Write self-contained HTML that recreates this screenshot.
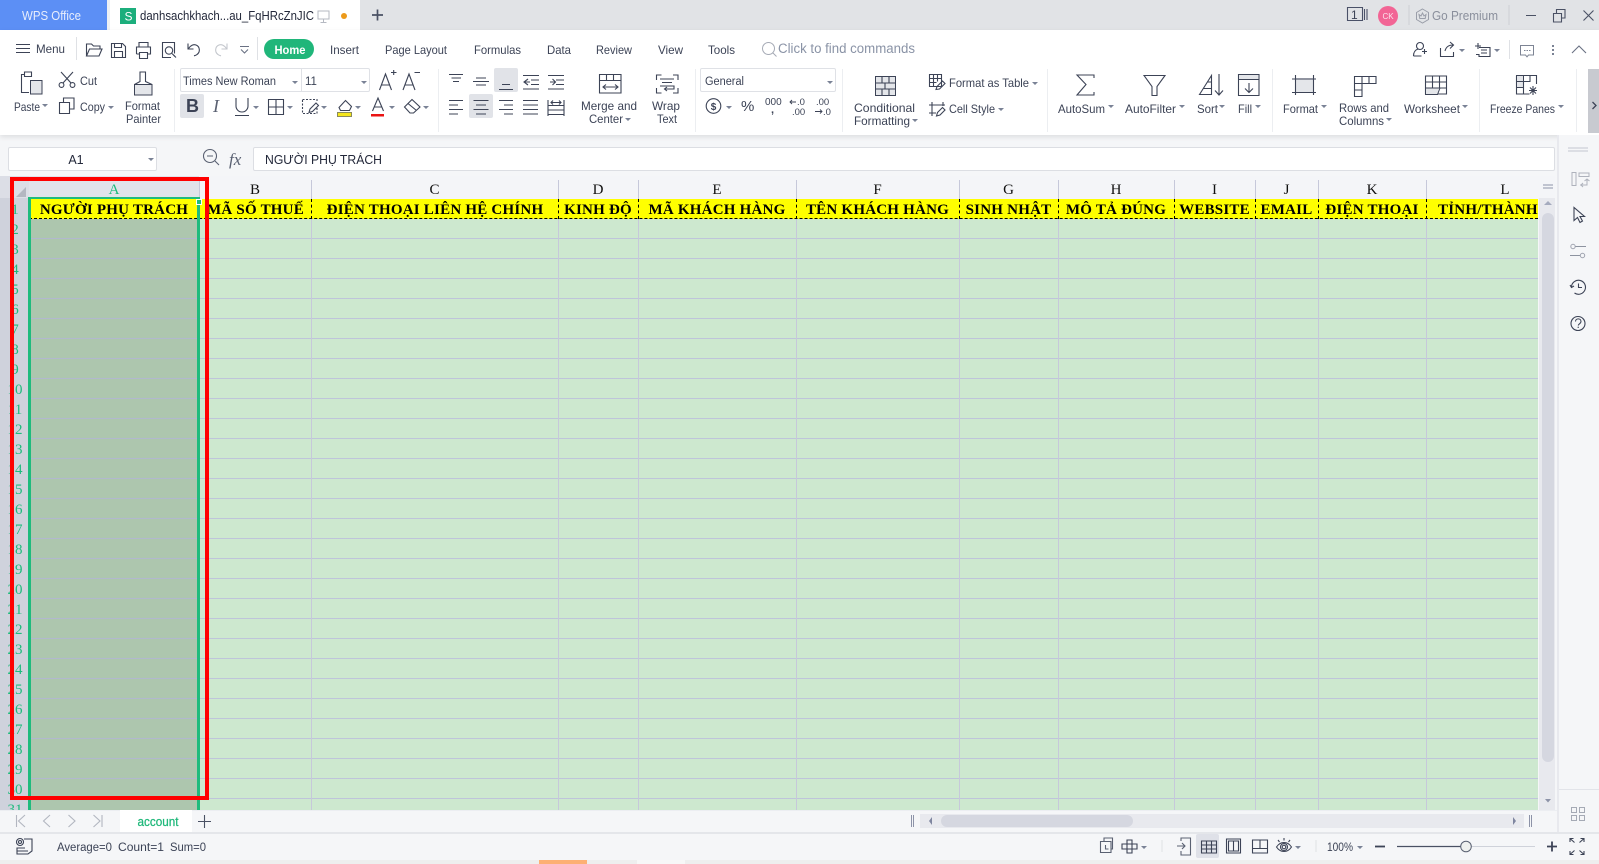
<!DOCTYPE html>
<html lang="vi"><head><meta charset="utf-8"><title>WPS Spreadsheet</title>
<style>
html,body{margin:0;padding:0;width:1599px;height:864px;overflow:hidden;background:#f5f6f8}
*{box-sizing:border-box}
.a{position:absolute}
#ui{position:absolute;left:0;top:0;width:1599px;height:864px;z-index:5;pointer-events:none}
#ui text{font-family:"Liberation Sans",sans-serif;font-size:12px;fill:#3c4356;letter-spacing:0}
.s{fill:none;stroke:#3c4356;stroke-width:1.1}
.h{position:absolute;top:181px;height:18px;font:15px/18px "Liberation Serif",serif;text-align:center;color:#111}
.y{position:absolute;top:201px;height:19px;font:bold 15px/19px "Liberation Serif",serif;color:#000;text-align:center;white-space:nowrap;letter-spacing:.22px;overflow:visible}
.v{position:absolute;top:180px;width:1px;height:630px;background:#c6c8da}
.d{position:absolute;top:199px;width:0;height:20px;border-left:1px dashed #000}
#rows{position:absolute;left:0;top:198px;width:29px;height:612px;overflow:hidden;background:#cfd2dc;padding-top:2px}
#rows div{height:20px;font:15px/20px "Liberation Serif",serif;color:#1fbb7d;text-align:center;padding-left:1px}
</style></head><body>

<div class="a" style="left:0;top:0;width:1599px;height:30px;background:#e1e3e6"></div>
<div class="a" style="left:0;top:0;width:107px;height:30px;background:#5c8ff5"></div>
<div class="a" style="left:107px;top:0;width:3px;height:30px;background:#eef0f4"></div>
<div class="a" style="left:110px;top:0;width:250px;height:30px;background:#fff"></div>
<div class="a" style="left:0;top:30px;width:1599px;height:105px;background:#fff;box-shadow:0 2px 5px rgba(0,0,0,.1)"></div>
<div class="a" style="left:180px;top:94px;width:24px;height:24px;background:#e1e3e8;border-radius:2px"></div>
<div class="a" style="left:494px;top:68px;width:24px;height:24px;background:#e1e3e8;border-radius:2px"></div>
<div class="a" style="left:469px;top:94px;width:24px;height:24px;background:#e1e3e8;border-radius:2px"></div>
<div class="a" style="left:1588px;top:69px;width:11px;height:64px;background:#c8cad0"></div>
<div class="a" style="left:264px;top:39px;width:50px;height:20px;background:#20b67a;border-radius:10px"></div>
<div class="a" style="left:180px;top:68px;width:190px;height:24px;border:1px solid #dfe1e6;border-radius:2px"></div>
<div class="a" style="left:301px;top:68px;width:1px;height:24px;background:#dfe1e6"></div>
<div class="a" style="left:700px;top:68px;width:136px;height:24px;border:1px solid #dfe1e6;border-radius:2px"></div>

<div class="a" style="left:8px;top:147px;width:149px;height:24px;background:#fff;border:1px solid #dcdee3;border-radius:2px"></div>
<div class="a" style="left:253px;top:147px;width:1302px;height:24px;background:#fff;border:1px solid #dcdee3;border-radius:2px"></div>

<!-- Grid -->
<div class="a" style="left:0;top:176px;width:1539px;height:23px;background:#f4f5f8"></div>
<div class="a" style="left:0;top:199px;width:1538px;height:611px;background:#cde8cf"></div>
<div class="a" style="left:29px;top:219px;width:171px;height:591px;background:#adc6ae"></div>
<div class="a" style="left:29px;top:219px;width:1509px;height:591px;background:repeating-linear-gradient(to bottom,transparent 0,transparent 19px,rgba(180,175,225,.62) 19px,rgba(180,175,225,.62) 19.8px,transparent 19.8px,transparent 20px)"></div>
<div class="a" style="left:0;top:176px;width:29px;height:23px;background:#dcdee6"></div>
<div class="a" style="left:29px;top:176px;width:170px;height:23px;background:#e1e3ea"></div>
<svg class="a" style="left:15px;top:186px" width="12" height="12"><path d="M1 11L11 1V11Z" fill="#b4b7c1"/></svg>

<div class="v" style="left:199px;height:18px"></div><div class="v" style="left:311px"></div><div class="v" style="left:558px"></div><div class="v" style="left:638px"></div><div class="v" style="left:796px"></div><div class="v" style="left:959px"></div><div class="v" style="left:1058px"></div><div class="v" style="left:1174px"></div><div class="v" style="left:1255px"></div><div class="v" style="left:1318px"></div><div class="v" style="left:1426px"></div>

<div class="h" style="left:29px;width:170px;color:#1fbb7d">A</div>
<div class="h" style="left:199px;width:112px">B</div>
<div class="h" style="left:311px;width:247px">C</div>
<div class="h" style="left:558px;width:80px">D</div>
<div class="h" style="left:638px;width:158px">E</div>
<div class="h" style="left:796px;width:163px">F</div>
<div class="h" style="left:959px;width:99px">G</div>
<div class="h" style="left:1058px;width:116px">H</div>
<div class="h" style="left:1174px;width:81px">I</div>
<div class="h" style="left:1255px;width:63px">J</div>
<div class="h" style="left:1318px;width:108px">K</div>
<div class="h" style="left:1426px;width:158px">L</div>

<div class="a" style="left:29px;top:199px;width:1509px;height:20px;background:#ff0;border-bottom:1px dashed #000"></div>
<div class="d" style="left:199px"></div><div class="d" style="left:311px"></div><div class="d" style="left:558px"></div><div class="d" style="left:638px"></div><div class="d" style="left:796px"></div><div class="d" style="left:959px"></div><div class="d" style="left:1058px"></div><div class="d" style="left:1174px"></div><div class="d" style="left:1255px"></div><div class="d" style="left:1318px"></div><div class="d" style="left:1426px"></div>
<div class="y" style="left:29px;width:170px">NGƯỜI PHỤ TRÁCH</div>
<div class="y" style="left:199px;width:113px">MÃ SỐ THUẾ</div>
<div class="y" style="left:312px;width:246px">ĐIỆN THOẠI LIÊN HỆ CHÍNH</div>
<div class="y" style="left:558px;width:80px">KINH ĐỘ</div>
<div class="y" style="left:638px;width:158px">MÃ KHÁCH HÀNG</div>
<div class="y" style="left:796px;width:163px">TÊN KHÁCH HÀNG</div>
<div class="y" style="left:959px;width:99px">SINH NHẬT</div>
<div class="y" style="left:1058px;width:116px">MÔ TẢ ĐÚNG</div>
<div class="y" style="left:1174px;width:81px">WEBSITE</div>
<div class="y" style="left:1255px;width:63px">EMAIL</div>
<div class="y" style="left:1318px;width:108px">ĐIỆN THOẠI</div>
<div class="y" style="left:1438px;width:100px;text-align:left">TỈNH/THÀNH</div>

<div id="rows"><div>1</div><div>2</div><div>3</div><div>4</div><div>5</div><div>6</div><div>7</div><div>8</div><div>9</div><div>10</div><div>11</div><div>12</div><div>13</div><div>14</div><div>15</div><div>16</div><div>17</div><div>18</div><div>19</div><div>20</div><div>21</div><div>22</div><div>23</div><div>24</div><div>25</div><div>26</div><div>27</div><div>28</div><div>29</div><div>30</div><div>31</div></div>

<div class="a" style="left:28px;top:197px;width:3px;height:613px;background:#1fbb7d"></div>
<div class="a" style="left:197px;top:197px;width:3px;height:613px;background:#1fbb7d"></div>
<div class="a" style="left:28px;top:197px;width:172px;height:2px;background:#1fbb7d"></div>
<div class="a" style="left:196px;top:199px;width:6px;height:6px;background:#1fbb7d;border:1px solid #fff"></div>
<div class="a" style="left:10px;top:177px;width:199px;height:623px;border:4px solid #f00;z-index:4"></div>

<!-- Scrollbar & side -->
<div class="a" style="left:1539px;top:176px;width:16px;height:634px;background:#e8e9ee"></div>
<div class="a" style="left:1539px;top:176px;width:16px;height:22px;background:#f4f5f8"></div>
<div class="a" style="left:1542px;top:213px;width:12px;height:549px;background:#d5d7e0;border-radius:6px"></div>
<div class="a" style="left:1557px;top:135px;width:42px;height:698px;background:#f5f6f8;border-left:2px solid #e8e9ee"></div>

<!-- Bottom -->
<div class="a" style="left:0;top:810px;width:1557px;height:22px;background:#f5f6f8;border-top:1px solid #eceef2"></div>
<div class="a" style="left:0;top:832px;width:1599px;height:28px;background:#f5f6f8;border-top:2px solid #e4e6ea"></div>
<div class="a" style="left:120px;top:810px;width:72px;height:22px;background:#fff"></div>
<div class="a" style="left:920px;top:814px;width:604px;height:14px;background:#e8e9ee"></div>
<div class="a" style="left:941px;top:815px;width:192px;height:12px;background:#d5d7e0;border-radius:6px"></div>
<div class="a" style="left:1196px;top:834px;width:23px;height:24px;background:#dfe1e8;border-radius:2px"></div>
<div class="a" style="left:0;top:860px;width:1599px;height:4px;background:#eeeeee"></div>
<div class="a" style="left:539px;top:860px;width:48px;height:4px;background:#fdb074"></div>
<div class="a" style="left:637px;top:860px;width:48px;height:4px;background:#f7f7f7"></div>

<svg id="ui" viewBox="0 0 1599 864">
<!-- Title bar -->
<text x="22" y="20" style="fill:#e8eefc;font-size:12.500px" textLength="59" lengthAdjust="spacingAndGlyphs">WPS Office</text>
<rect x="120" y="8" width="16" height="16" fill="#1cae7c"/>
<text x="124.500" y="20.500" style="fill:#fff;font-size:12px">S</text>
<text x="140" y="20" style="fill:#23283a;font-size:12.500px" textLength="174" lengthAdjust="spacingAndGlyphs">danhsachkhach...au_FqHRcZnJIC</text>
<path d="M318 11h11v8h-11zM323.500 19v3M320.500 22.500h6" fill="none" stroke="#b5b9c2"/>
<circle cx="344" cy="16" r="3" fill="#ec9a1a"/>
<path d="M372 15h11M377.500 9.500v11" fill="none" stroke="#4a5164" stroke-width="1.700"/>
<path d="M1347.500 7.500h15v13h-15zM1364.500 9v11M1367 9v11" class="s" style="stroke:#4a5168"/>
<text x="1351" y="19" style="font-size:12px;fill:#3c4356">1</text>
<circle cx="1388" cy="16" r="10" fill="#f26595"/>
<text x="1388" y="19" text-anchor="middle" style="fill:#fbe3ec;font-size:8px">CK</text>
<path d="M1409 5v20M1509 5v20" stroke="#cdcfd4" fill="none"/>
<path d="M1422.500 9l6 3.500v7l-6 3.500-6-3.500v-7zM1419 14.500l2 1.500 1.500-3 1.500 3 2-1.500-.8 4h-5.400z" fill="none" stroke="#9a9ea9"/>
<text x="1432" y="20" style="fill:#8a8f9c;font-size:13px" textLength="66" lengthAdjust="spacingAndGlyphs">Go Premium</text>
<path d="M1526 15.500h10" stroke="#4a5164" fill="none"/>
<path d="M1553.500 13.500h8v8.500h-8zM1556.500 13v-3.500h8.500v8.500h-3.500" class="s" style="stroke:#4a5164"/>
<path d="M1583.500 10.500l10 10M1593.500 10.500l-10 10" class="s" style="stroke:#4a5164"/>

<!-- Menu row -->
<path d="M16 44.500h14M16 48.500h14M16 52.500h14" class="s"/>
<text x="36" y="53" textLength="29" lengthAdjust="spacingAndGlyphs">Menu</text>
<path d="M76.500 37v23M257.500 37v23M1509.500 40v19" stroke="#dfe1e5" fill="none"/>
<path d="M86.500 56v-12h5l2 2h6.500v3M86.500 56l3-7h12.500l-3 7z" class="s"/>
<path d="M111.500 43.500h11l3 3v11h-14zM114.500 43.500v4h7v-4M114.500 57.500v-6h8v6" class="s"/>
<path d="M139 47v-4.500h9v4.500M136.500 54v-7h14v7h-3M139 54h-2.500M139.500 52.500h8v6h-8z" class="s"/>
<path d="M171 57.500h-8.500v-15h12v11M176 57.500l-2.500-2.500" class="s"/><circle cx="169" cy="50.500" r="3.700" class="s"/><path d="M172 53.500l3 3" class="s"/>
<path d="M188 43.500v5.500h5.500M188.500 48.500c2-3 5-4.500 7.500-3.500 4 1.500 4.500 7 1 9.500-1 .8-2 1-3 1.300" class="s"/>
<path d="M227 43.500v5.500h-5.500M226.500 48.500c-2-3-5-4.500-7.500-3.500-4 1.500-4.500 7-1 9.500 1 .8 2 1 3 1.300" fill="none" stroke="#c4c7cd" stroke-width="1.100"/>
<path d="M240 46.500h9M241 49.500l3.500 3.500 3.500-3.500" class="s" style="stroke:#6a7183"/>
<text x="274.500" y="54" style="fill:#fff;font-weight:bold" textLength="31" lengthAdjust="spacingAndGlyphs">Home</text>
<text x="330" y="54" textLength="29" lengthAdjust="spacingAndGlyphs">Insert</text><text x="385" y="54" textLength="62" lengthAdjust="spacingAndGlyphs">Page Layout</text><text x="474" y="54" textLength="47" lengthAdjust="spacingAndGlyphs">Formulas</text>
<text x="547" y="54" textLength="24" lengthAdjust="spacingAndGlyphs">Data</text><text x="596" y="54" textLength="36" lengthAdjust="spacingAndGlyphs">Review</text><text x="658" y="54" textLength="25" lengthAdjust="spacingAndGlyphs">View</text><text x="708" y="54" textLength="27" lengthAdjust="spacingAndGlyphs">Tools</text>
<circle cx="768.500" cy="48.500" r="6" fill="none" stroke="#a5aab5"/><path d="M773 53l3.500 3.500" stroke="#a5aab5" fill="none"/>
<text x="778" y="53" style="fill:#8a93a6;font-size:13.500px" textLength="137" lengthAdjust="spacingAndGlyphs">Click to find commands</text>
<circle cx="1420" cy="46" r="3.500" class="s"/><path d="M1413.500 56c0-5 3-6.500 4.500-7M1413.500 56h8M1422 51.500h5M1424.500 49v5" class="s"/>
<path d="M1440.500 48v8.500h13V52M1445 51c1-4 4-6 8-6M1450 42l3.500 3-3.500 3.500" class="s"/>
<path d="M1475 46h6M1478 43v6M1479 47.500h11v9h-11v-2h-3M1481 50h6M1481 53h6" class="s"/>
<path d="M1520.500 45.500h13v9.500h-5l-1.500 1.800-1.500-1.800h-5z" fill="none" stroke="#7d8494"/><path d="M1524 50.500h1.500M1526.500 50.500h1.500M1529 50.500h1.500" stroke="#7d8494" fill="none"/>
<path d="M1553 45v2M1553 49v2M1553 53v2" stroke="#7a8294" stroke-width="2" fill="none"/>
<path d="M1572 53l7-7 7 7" fill="none" stroke="#6a7183" stroke-width="1.100"/>

<!-- Clipboard group -->
<path d="M32 74.500h-1M25 74.500h-3.500v18H29" class="s"/><path d="M24.500 72h7v4.500h-7z" class="s"/><path d="M30.500 80.500h11.500v13.500H30.500z" fill="#e4e6ea" stroke="#3c4356"/>
<text x="14" y="111" textLength="26" lengthAdjust="spacingAndGlyphs">Paste</text>
<circle cx="61.500" cy="85" r="2.400" class="s"/><circle cx="72.500" cy="85" r="2.400" class="s"/><path d="M63 83L73 72M71 83L61 72" class="s"/>
<text x="80" y="85" textLength="17" lengthAdjust="spacingAndGlyphs">Cut</text>
<path d="M59.500 102.500h10v11h-10zM63.500 102v-4h10.500v11h-4" class="s"/>
<text x="80" y="111" textLength="25" lengthAdjust="spacingAndGlyphs">Copy</text>
<path d="M134.500 84.500h17.500V95h-17.500z" fill="#e4e6ea" stroke="#3c4356"/><path d="M134.500 84.500l5.500-3v-9.500h5.500v9.500l6.500 3" class="s"/>
<text x="125" y="110" textLength="35" lengthAdjust="spacingAndGlyphs">Format</text><text x="126" y="123" textLength="35" lengthAdjust="spacingAndGlyphs">Painter</text>
<path d="M174.500 69v63M438.500 69v63M695.500 69v63M842.500 69v63M1047.500 69v63M1272.500 69v63M1479.500 69v63M1576.500 69v63" stroke="#eceef1" fill="none"/>

<!-- Font group -->
<text x="183" y="85" style="font-size:11.500px" textLength="93" lengthAdjust="spacingAndGlyphs">Times New Roman</text><text x="305" y="85" style="font-size:11.500px">11</text>
<path d="M379.500 90l6-16 6 16M381.500 85h8M391 72.500h5.500M393.700 70v5" class="s"/>
<path d="M403 90l6-16 6 16M405 85h8M414.500 72.500h5.500" class="s"/>
<text x="186" y="112" style="font-weight:bold;font-size:18px;fill:#3c4356">B</text>
<text x="213" y="112" style="font-family:'Liberation Serif',serif;font-style:italic;font-size:18px;fill:#5a6172">I</text>
<path d="M236 98v8a6 6 0 0 0 12 0v-8M235 115.500h14" class="s"/>
<path d="M268.500 99.500h15v15h-15zM276 99.500v15M268.500 107h15" class="s"/>
<path d="M302.500 99.500h14.500v3M317 108v5.500h-14.500v-14" class="s" stroke-dasharray="2 1.500"/><path d="M310 109l6-6 2.500 2.500-6 6-3.500 1z" class="s"/>
<path d="M339 107.500l6.500-7 6 6-2 4h-9z" class="s"/><rect x="337.500" y="112.500" width="14" height="4" fill="#f5e61c" stroke="#8a8a5c"/>
<path d="M372.500 111l5.500-13 5.500 13M374.500 107h7" class="s"/><rect x="371" y="114" width="13" height="2.500" fill="#ea1414"/>
<path d="M404.500 107l7.500-7.500 8 7.500-6.500 6h-3.500zM408 103.500l8.500 7" class="s"/>

<!-- Alignment -->
<path d="M449 74.500h14M451.500 78h9.500M453 81.500h6" class="s"/>
<path d="M473 81.500h16M476 78h10M476 85h10" class="s"/>
<path d="M502 84.500h8M499 89.500h14" class="s"/>
<path d="M523 75.500h16M531 80h8M531 84.500h8M523 89h16M528 79l-4 3 4 3M524 82h6" class="s"/>
<path d="M548 75.500h16M556 80h8M556 84.500h8M548 89h16M550 82h5M552.500 79l3 3-3 3" class="s"/>
<path d="M449 100.500h14M449 105h9M449 109.500h14M449 114h9" class="s"/>
<path d="M473.500 100.500h15M476 105h10M473.500 109.500h15M476 114h10" class="s"/>
<path d="M499 100.500h14M504 105h9M499 109.500h14M504 114h9" class="s"/>
<path d="M523 100.500h15M523 105h15M523 109.500h15M523 114h15" class="s"/>
<path d="M548 100v16M564 100v16M548 105.500h16M548 110h16M548 114.500h16M551 102.500h10M553 100.500l-2 2 2 2M559 100.500l2 2-2 2" class="s"/>

<!-- Merge / wrap -->
<path d="M599.500 74.500h21.500v18.500h-21.500zM599.500 80.500h21.500M606.500 74.500v6M613.500 74.500v6M603 87h14.500M606 84.500l-3 2.500 3 2.500M615 84.500l3 2.500-3 2.500" class="s"/>
<text x="581" y="110" textLength="56" lengthAdjust="spacingAndGlyphs">Merge and</text><text x="589" y="123" textLength="34" lengthAdjust="spacingAndGlyphs">Center</text>
<path d="M656.500 80v-5h5M673 75h5v5M656.500 88v5h5M673 93h5v-5M660 79h14M662 82.500h10M660 86h14v3h-9M667 87l-2.500 2 2.500 2" class="s"/>
<text x="652" y="110" textLength="28" lengthAdjust="spacingAndGlyphs">Wrap</text><text x="657" y="123" textLength="20" lengthAdjust="spacingAndGlyphs">Text</text>

<!-- Number -->
<text x="705" y="85" style="font-size:11.500px" textLength="39" lengthAdjust="spacingAndGlyphs">General</text>
<circle cx="713.500" cy="106" r="7.300" class="s"/><text x="713.500" y="110" text-anchor="middle" style="font-size:10px;font-weight:bold">$</text>
<text x="741" y="111" style="font-size:15px">%</text>
<text x="765" y="105" style="font-size:10px">000</text><text x="771" y="113" style="font-size:11px;font-weight:bold">,</text>
<text x="797" y="105" style="font-size:9.500px">.0</text><path d="M790 102h6M792 100l-2 2 2 2" class="s" style="stroke-width:.9"/><text x="792" y="115" style="font-size:9.500px">.00</text>
<text x="816" y="105" style="font-size:9.500px">.00</text><path d="M815 111.500h7M820 109.500l2 2-2 2" class="s" style="stroke-width:.9"/><text x="823" y="115" style="font-size:9.500px">.0</text>

<!-- Styles -->
<path d="M875.500 76.500h20v19h-20z" fill="#e4e6ea" stroke="#3c4356"/><path d="M875.500 83h20M875.500 89h20M882 76.500v6.500M889 76.500v6.500M885 83v6M882 89v6.500M889 89v6.500" class="s"/>
<text x="854" y="112" textLength="61" lengthAdjust="spacingAndGlyphs">Conditional</text><text x="854" y="125" textLength="56" lengthAdjust="spacingAndGlyphs">Formatting</text>
<path d="M929.500 74.500h12v12h-12zM929.500 78.500h12M929.500 82.500h7M933.500 74.500v12M937.500 74.500v7M936 89.500l1-3 5.500-5.500 2.500 2.500-5.500 5.500z" class="s"/>
<text x="949" y="87" textLength="80" lengthAdjust="spacingAndGlyphs">Format as Table</text>
<path d="M929 105h16M932 102v14M929 113h7M943 102v4M936.500 116l1-3.500 5-5 2.500 2.500-5 5z" class="s"/>
<text x="949" y="113" textLength="46" lengthAdjust="spacingAndGlyphs">Cell Style</text>

<!-- Editing -->
<path d="M1094 78v-3h-17l9 9.500-9 10.500h17v-3" class="s"/>
<text x="1058" y="113" textLength="47" lengthAdjust="spacingAndGlyphs">AutoSum</text>
<path d="M1144 75.500h21l-8 11v9h-5v-9z" class="s"/>
<text x="1125" y="113" textLength="51" lengthAdjust="spacingAndGlyphs">AutoFilter</text>
<path d="M1199.500 94.500l12-19v19zM1203 88.500h8.500M1207 82h4.500M1219 74v21M1215 90.500l4 4.500 4-4.500" class="s"/>
<text x="1197" y="113" textLength="21" lengthAdjust="spacingAndGlyphs">Sort</text>
<path d="M1238.500 74.500h20.500v21h-20.500z" class="s"/><rect x="1238.500" y="74.500" width="20.500" height="5" fill="#e4e6ea" stroke="#3c4356"/><path d="M1249 83v9M1245 88.500l4 4 4-4" class="s"/>
<text x="1238" y="113" textLength="14" lengthAdjust="spacingAndGlyphs">Fill</text>

<!-- Cells -->
<rect x="1295" y="78" width="19" height="15" fill="#e4e6ea"/><path d="M1292 79h24M1292 92.500h24M1295.500 75v20M1313.500 75v20" class="s"/>
<text x="1283" y="113" textLength="35" lengthAdjust="spacingAndGlyphs">Format</text>
<path d="M1354.500 76.500h21.500v7h-21.500zM1354.500 83.500v13h7.500V76.500M1354.500 90h7.500M1369 76.500v7" class="s"/>
<text x="1339" y="112" textLength="50" lengthAdjust="spacingAndGlyphs">Rows and</text><text x="1339" y="125" textLength="45" lengthAdjust="spacingAndGlyphs">Columns</text>
<path d="M1425.500 76h21v18h-21zM1425.500 82h21M1425.500 88h21M1432.500 76v12M1439.500 76v12" class="s"/><path d="M1425.500 88h14.500l-2.500 6.500h-12z" fill="#e4e6ea" stroke="#3c4356"/>
<text x="1404" y="113" textLength="56" lengthAdjust="spacingAndGlyphs">Worksheet</text>
<path d="M1516.500 75.500h20v8.500M1516.500 75.500V94h13" class="s"/><rect x="1516.500" y="75.500" width="7" height="12" fill="#e4e6ea" stroke="#3c4356"/><path d="M1516.500 81.500h14M1523.500 81.500v12.500M1530 75.500v6" class="s"/><path d="M1533 86v9M1529 90.500h8M1530 87.500l6 6M1536 87.500l-6 6" class="s"/>
<text x="1490" y="113" textLength="65" lengthAdjust="spacingAndGlyphs">Freeze Panes</text>
<path d="M1592.500 102l3.500 3.500-3.500 3.500" fill="none" stroke="#3c4356" stroke-width="1.300"/>

<!-- Carets -->
<path fill="#7a8296" d="M42 104h6l-3 3zM108 106h6l-3 3zM292 81h6l-3 3zM361 81h6l-3 3zM253 106h6l-3 3zM287 106h6l-3 3zM321 106h6l-3 3zM355 106h6l-3 3zM389 106h6l-3 3zM423 106h6l-3 3zM625 118h6l-3 3zM827 81h6l-3 3zM726 106h6l-3 3zM912 119h6l-3 3zM1032 82h6l-3 3zM998 108h6l-3 3zM1108 105h6l-3 3zM1179 105h6l-3 3zM1219 105h6l-3 3zM1255 105h6l-3 3zM1321 105h6l-3 3zM1386 118h6l-3 3zM1462 105h6l-3 3zM1558 105h6l-3 3zM1459 49h6l-3 3zM1494 49h6l-3 3zM148 158h6l-3 3zM1141 846h6l-3 3zM1295 846h6l-3 3zM1357 846h6l-3 3z"/>

<!-- Formula bar -->
<text x="76" y="164" text-anchor="middle" style="font-size:12.500px;fill:#23283a">A1</text>
<circle cx="210" cy="156" r="6.500" class="s" style="stroke:#5a6172"/><path d="M207 156h6M215 161l4 4" class="s" style="stroke:#5a6172"/>
<text x="229" y="165" style="font-family:'Liberation Serif',serif;font-style:italic;font-size:17px;fill:#5a6172">fx</text>
<text x="265" y="164" style="font-size:12.500px;fill:#23283a" textLength="117" lengthAdjust="spacingAndGlyphs">NGƯỜI PHỤ TRÁCH</text>

<!-- Scroll & side panel icons -->
<path d="M1543 185h10M1543 188h10" stroke="#8d93a8" fill="none"/>
<path d="M1544 205l4-4 4 4z" fill="#a5abbe"/><path d="M1545 799h6l-3 3.500z" fill="#8d93a8"/>
<path d="M1568 148h20M1568 151h20" stroke="#c4c7cf" fill="none"/>
<path d="M1572 172.500h4v13h-4zM1579 173h10v3.500h-10zM1580 185h7v-6M1584.500 181l2.500-2 2.500 2M1583 183l-2 2 2 2" fill="none" stroke="#aeb2bc"/>
<path d="M1574 207.500v13l3.500-3 2.500 5 2.500-1.500-2.500-4.500h4.500z" class="s" stroke-width="1.200"/>
<circle cx="1573" cy="246.500" r="2.200" fill="none" stroke="#a0a4b0"/><path d="M1575.500 246.500h10.500M1570 255.500h10.500" stroke="#8d93a0" fill="none"/><circle cx="1582.500" cy="255.500" r="2.200" fill="none" stroke="#a0a4b0"/>
<path d="M1571.500 287a7 7 0 1 1 3 6" class="s"/><path d="M1570 285l1.500 2.500 2.500-1.500M1578.500 283.500v4h3.500" class="s"/>
<circle cx="1578" cy="323.500" r="7" class="s"/><path d="M1575.500 321.500c0-3.500 5.500-3.500 5.500 0 0 2-2.500 2.200-2.700 4" class="s"/><circle cx="1578.200" cy="327.300" r=".7" fill="#3c4356"/>
<path d="M1559 789.500h40" stroke="#e2e4e9" fill="none"/>
<path d="M1571.500 807.500h5v5h-5zM1579.500 807.500h5v5h-5zM1571.500 815.500h5v5h-5zM1579.500 815.500h5v5h-5z" fill="none" stroke="#a5aab5" stroke-width="1"/>

<!-- Sheet bar -->
<path d="M16.500 815v12M25 815l-6.500 6 6.500 6M50 815l-6.500 6 6.500 6M68.500 815l6.500 6-6.500 6M93.500 815l6.500 6-6.500 6M102 815v12" fill="none" stroke="#b2b6c0" stroke-width="1.100"/>
<text x="137.500" y="826" style="fill:#1fb87a;font-size:12.500px;stroke:#1fb87a;stroke-width:.25" textLength="41" lengthAdjust="spacingAndGlyphs">account</text>
<path d="M198 821.500h13M204.500 815v13" class="s" style="stroke:#4a5164"/>
<path d="M911.500 815v12M913.500 815v12M1529.500 815v12M1531.500 815v12" stroke="#8d93a8" fill="none"/>
<path d="M932 817v8l-3-4zM1513 817v8l3-4z" fill="#7f86a0"/>

<!-- Status -->
<circle cx="20" cy="842" r="3.500" class="s"/><circle cx="20" cy="842" r="1.500" class="s"/><path d="M24 839h8v12l-4 3H17v-3h11M17 851v-3h8" class="s"/>
<text x="57" y="851" style="font-size:11.500px" textLength="55" lengthAdjust="spacingAndGlyphs">Average=0</text><text x="118" y="851" style="font-size:11.500px" textLength="46" lengthAdjust="spacingAndGlyphs">Count=1</text><text x="170" y="851" style="font-size:11.500px" textLength="36" lengthAdjust="spacingAndGlyphs">Sum=0</text>
<path d="M1100.500 841.500h10.500v11h-10.500zM1104 841v-3h8.500v11h-1.500M1105.500 845v4h3" class="s" style="stroke:#5a6172"/>
<path d="M1127 840h5v4h5v5h-5v4h-5v-4h-5v-5h5zM1127 844h5v5h-5z" class="s"/>
<path d="M1162 840v12M1316 840v12" stroke="#dfe1e5" fill="none"/>
<path d="M1181 841v-3h9.500v17h-9.500v-4M1177 846h8M1182 843l3 3-3 3" class="s" style="stroke:#5a6172"/>
<path d="M1201.500 841h15v12h-15zM1201.500 845h15M1201.500 849h15M1206.500 841v12M1211.500 841v12" class="s"/>
<path d="M1226.500 839h14v14h-14zM1228.500 841h10v10h-10zM1233.500 841v10" class="s"/>
<path d="M1252.500 840h15v13h-15zM1260 840v8.500h-7.500M1260 848.500h7.500" class="s"/>
<path d="M1276.500 847c4-6 11-6 15 0-4 6-11 6-15 0z" class="s"/><circle cx="1284" cy="847" r="3.500" class="s"/><circle cx="1284" cy="847" r="1.800" class="s"/><path d="M1284 838v2.500M1278 840l1.500 2M1290 840l-1.500 2" class="s"/>
<text x="1327" y="851" style="font-size:12px;fill:#3c4356" textLength="26" lengthAdjust="spacingAndGlyphs">100%</text>
<path d="M1375 846.500h10" stroke="#3c4356" stroke-width="1.800" fill="none"/>
<path d="M1397 846.500h69" stroke="#4a5164" stroke-width="1.200" fill="none"/><path d="M1466 846.500h69" stroke="#cfd2da" fill="none"/>
<circle cx="1466" cy="846.500" r="5.300" fill="#eef0ee" stroke="#5a6172"/>
<path d="M1547 846.500h10M1552 841.500v10" stroke="#3c4356" stroke-width="1.800" fill="none"/>
<path d="M1570 842v-3.500h3.500M1584 842v-3.500h-3.500M1570 851v3.500h3.500M1584 851v3.500h-3.500M1570.500 839l4 3.500M1583.500 839l-4 3.500M1570.500 854l4-3.500M1583.500 854l-4-3.500" class="s"/>
</svg>
</body></html>
